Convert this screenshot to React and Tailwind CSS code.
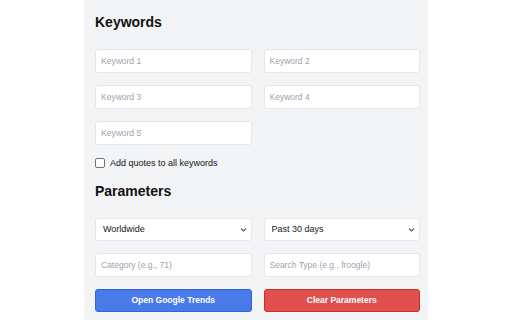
import { useState } from "react";

const font = { fontFamily: '"Liberation Sans", Arial, sans-serif' };

function Chevron() {
    return (
        <svg width="7" height="5" viewBox="0 0 7 5" className="pointer-events-none absolute right-[5px] top-1/2 -translate-y-1/2">
            <path d="M1 1l2.5 2.5L6 1" fill="none" stroke="#4b5563" strokeWidth="1.1" />
        </svg>
    );
}

function TextInput({ placeholder }) {
    return (
        <input
            type="text"
            placeholder={placeholder}
            className="block h-[24px] w-full rounded-[3px] border border-[#e5e7eb] bg-white px-[5px] text-[8.5px] text-[#111827] outline-none placeholder:text-[#9ca3af]"
        />
    );
}

function Select({ value, options }) {
    return (
        <div className="relative h-[23px]">
            <select
                defaultValue={value}
                className="block h-[23px] w-full appearance-none rounded-[3px] border border-[#e5e7eb] bg-white pl-[7px] text-[9px] text-[#111827] outline-none"
            >
                {options.map((o) => (
                    <option key={o}>{o}</option>
                ))}
            </select>
            <Chevron />
        </div>
    );
}

export default function App() {
    const [quotes, setQuotes] = useState(false);

    return (
        <div className="h-[320px] w-[512px] overflow-hidden bg-white" style={font}>
            <div className="ml-[84px] h-[320px] w-[344px] bg-[#f3f4f6] pl-[11px] pr-[8px] pt-[13px]">
                <h2 className="text-[14px] font-bold leading-[18px] text-[#111]">Keywords</h2>

                <div className="mt-[18px] grid grid-cols-2 gap-x-[12px] gap-y-[12px]">
                    <TextInput placeholder="Keyword 1" />
                    <TextInput placeholder="Keyword 2" />
                    <TextInput placeholder="Keyword 3" />
                    <TextInput placeholder="Keyword 4" />
                    <TextInput placeholder="Keyword 5" />
                </div>

                <label className="mt-[12px] flex h-[12px] items-center gap-[5px] text-[9px] leading-[12px] text-[#111]">
                    <input
                        type="checkbox"
                        checked={quotes}
                        onChange={(e) => setQuotes(e.target.checked)}
                        className="m-0 h-[10px] w-[10px] appearance-none rounded-[2px] border border-[#6b7280] bg-white checked:bg-[#3b82f6]"
                    />
                    Add quotes to all keywords
                </label>

                <h2 className="mt-[13px] text-[14px] font-bold leading-[18px] text-[#111]">Parameters</h2>

                <div className="mt-[18px] grid grid-cols-2 gap-x-[12px] gap-y-[12px]">
                    <Select value="Worldwide" options={["Worldwide", "United States", "United Kingdom"]} />
                    <Select value="Past 30 days" options={["Past hour", "Past day", "Past 7 days", "Past 30 days", "Past 12 months"]} />
                    <TextInput placeholder="Category (e.g., 71)" />
                    <TextInput placeholder="Search Type (e.g., froogle)" />
                    <button className="h-[23px] rounded-[3px] border border-[#2f66dd] bg-[#4a7aea] text-[8.5px] font-semibold text-white">
                        Open Google Trends
                    </button>
                    <button className="h-[23px] rounded-[3px] border border-[#cf2f2b] bg-[#e0504d] text-[8.5px] font-semibold text-white">
                        Clear Parameters
                    </button>
                </div>
            </div>
        </div>
    );
}
